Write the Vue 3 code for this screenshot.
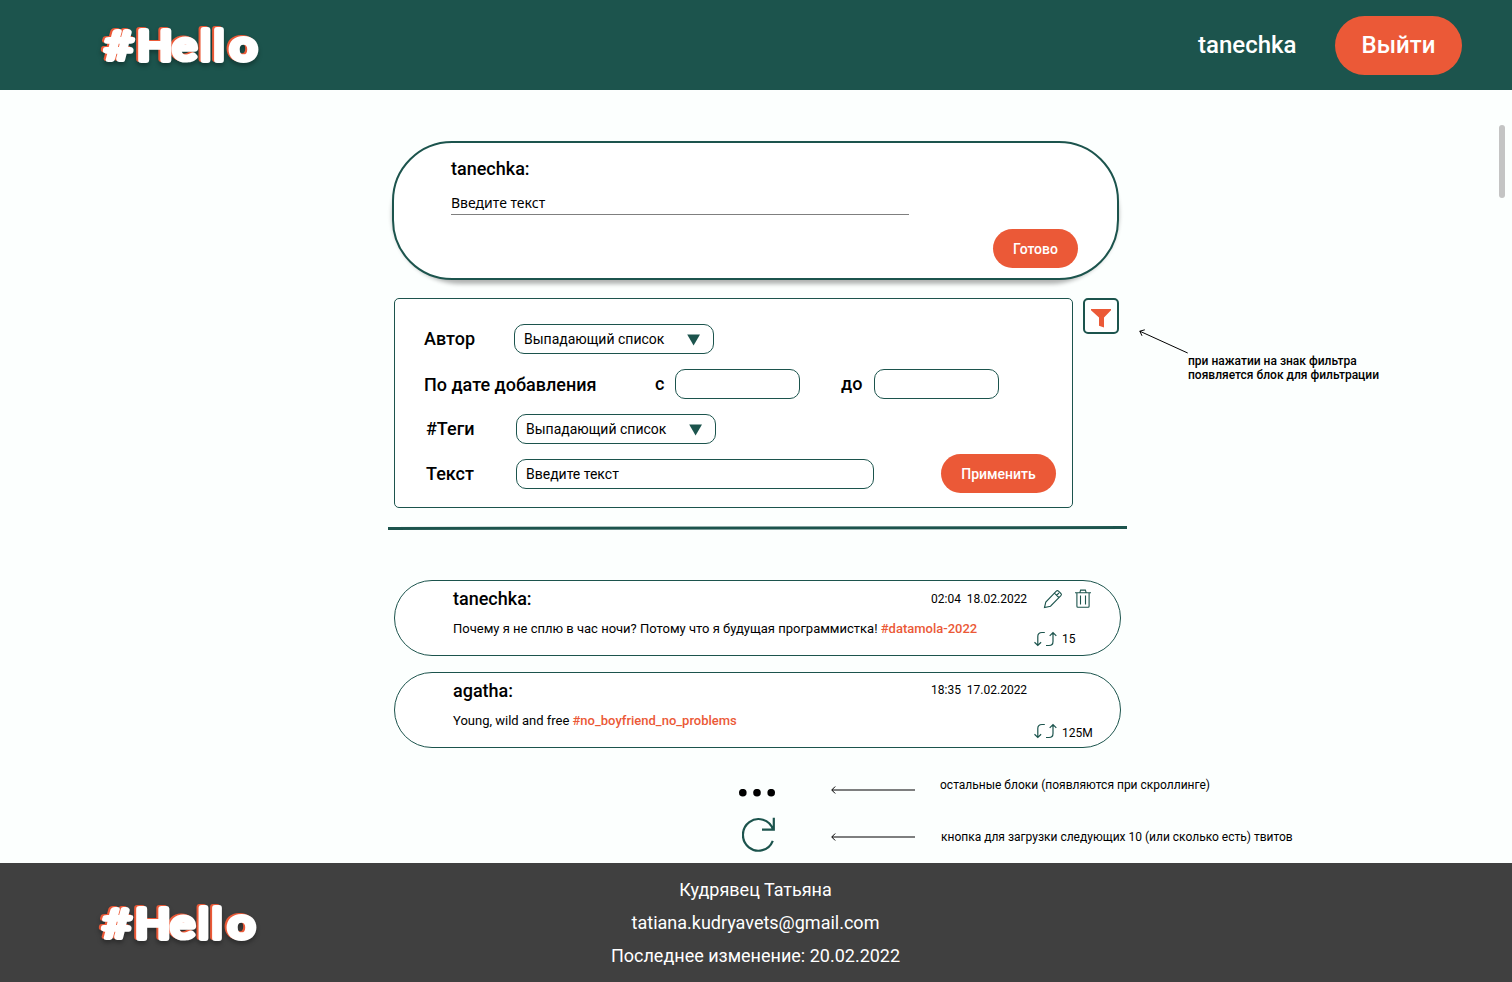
<script setup>
const letters = [
  { ch: '#', x: 104, w: 30, s: 4.2 },
  { ch: 'H', x: 137.2, w: 35, s: 5.8 },
  { ch: 'e', x: 172.6, w: 24.5, s: 5.2 },
  { ch: 'l', x: 200.6, w: 10, s: 5.8 },
  { ch: 'l', x: 214, w: 10, s: 5.8 },
  { ch: 'o', x: 230, w: 27, s: 5.8 }
]
const tweets = [
  { author: 'tanechka:', text: 'Почему я не сплю в час ночи? Потому что я будущая программистка!', tag: '#datamola-2022', date: '02:04\u00a0 18.02.2022', count: '15', own: true },
  { author: 'agatha:', text: 'Young, wild and free', tag: '#no_boyfriend_no_problems', date: '18:35\u00a0 17.02.2022', count: '125M', own: false }
]
</script>

<template>
  <div class="page">
    <header class="header">
      <svg class="logo" width="170" height="60" viewBox="95 15 170 60">
        <text v-for="(l, i) in letters" :key="i" :x="l.x" y="60.3" :textLength="l.w" :stroke-width="l.s" lengthAdjust="spacingAndGlyphs">{{ l.ch }}</text>
      </svg>
      <span class="user">tanechka</span>
      <button class="btn logout">Выйти</button>
    </header>

    <main class="main">
      <div class="scrollbar"></div>
      <section class="composer">
        <h2 class="author">tanechka:</h2>
        <div class="compose-input">Введите текст</div>
        <button class="btn small done">Готово</button>
      </section>

      <div class="filter-row">
        <section class="filters">
          <div class="line">
            <label class="lbl">Автор</label>
            <div class="field select"><span>Выпадающий список</span><svg width="14" height="12" viewBox="0 0 14 12"><path d="M.2 .5H13L6.6 11.5Z" fill="#1c544d" /></svg></div>
          </div>
          <div class="line dates">
            <label class="lbl wide">По дате добавления</label>
            <span class="lbl from">с</span><div class="field date"></div>
            <span class="lbl to">до</span><div class="field date"></div>
          </div>
          <div class="line shifted">
            <label class="lbl">#Теги</label>
            <div class="field select"><span>Выпадающий список</span><svg width="14" height="12" viewBox="0 0 14 12"><path d="M.2 .5H13L6.6 11.5Z" fill="#1c544d" /></svg></div>
          </div>
          <div class="line shifted">
            <label class="lbl">Текст</label>
            <div class="field text">Введите текст</div>
            <button class="btn small apply">Применить</button>
          </div>
        </section>
        <button class="filter-btn">
          <svg width="20" height="19" viewBox="0 0 20 19"><path d="M0 0H20V1.2L13 8.5V18.5L8 16.8V8.5L0 1.2Z" fill="#eb5937" /></svg>
        </button>
        <svg class="pointer" width="50" height="26" viewBox="0 0 50 26" fill="none" stroke="#000" stroke-width="1"><path d="M48.7 25L.8 3.2M5.8 1.8L.8 3.2L3 7.8" /></svg>
        <p class="note bold">при нажатии на знак фильтра<br />появляется блок для фильтрации</p>
      </div>

      <svg class="divider" width="739" height="5" viewBox="0 0 739 5"><path d="M0 3.5L739 2.5" stroke="#1c544d" stroke-width="3" /></svg>

      <article v-for="t in tweets" :key="t.author" class="tweet" :class="{ own: t.own }">
        <div class="body">
          <h2 class="author">{{ t.author }}</h2>
          <p class="msg">{{ t.text }} <b>{{ t.tag }}</b></p>
        </div>
        <div class="side">
          <div class="meta">
            <time>{{ t.date }}</time>
            <template v-if="t.own">
              <svg class="pencil" width="20" height="20" viewBox="0 0 20 20" fill="none" stroke="#1c544d" stroke-width="1.1"><path d="M1.5 18.5L2.8 13L13.3 2.1Q14.4 1 15.5 2.1L17.9 4.5Q19 5.6 17.9 6.7L7.5 17.2ZM11.5 4.2L15.8 8.5M13.6 6.3L15.9 4" /></svg>
              <svg class="trash" width="16" height="19" viewBox="0 0 16 19" fill="none" stroke="#1c544d" stroke-width="1.1"><path d="M0 3.8H16M4.8 3.8L5.6 1.1H10.4L11.2 3.8M1.9 3.8V17.3Q1.9 18.3 2.9 18.3H13.1Q14.1 18.3 14.1 17.3V3.8M5.5 6.5V15.5M10.5 6.5V15.5" /></svg>
            </template>
          </div>
          <div class="retweet">
            <svg width="23" height="16" viewBox="0 0 23 16" fill="none" stroke="#1c544d" stroke-width="1.2"><path d="M10.8 1.5H8Q3.8 1.5 3.8 5.5V14M.5 11.3L3.8 14.5L7.1 11.3M12 14.5H15Q19 14.5 19 10.5V2M15.7 4.8L19 1.5L22.3 4.8" /></svg>
            <span>{{ t.count }}</span>
          </div>
        </div>
      </article>

      <div class="more">
        <svg class="dots" width="36" height="8" viewBox="0 0 36 8"><circle cx="3.8" cy="3.7" r="3.8" /><circle cx="18" cy="3.7" r="3.8" /><circle cx="32.2" cy="3.7" r="3.8" /></svg>
        <svg class="arrow" width="84" height="8" viewBox="0 0 84 8" fill="none" stroke="#000"><path d="M1 4H84" stroke-opacity=".5" stroke-width="2" /><path d="M4.2 .5L.7 4L4.2 7.5" /></svg>
        <p class="note">остальные блоки (появляются при скроллинге)</p>
      </div>
      <div class="more reload">
        <svg class="circle" width="34" height="36" viewBox="0 0 34 36" fill="none" stroke="#1c544d" stroke-width="2.2"><path d="M31 12.5A15.5 15.8 0 1 0 30.8 23.8M31.8 .8V12.6H20" /></svg>
        <svg class="arrow" width="84" height="8" viewBox="0 0 84 8" fill="none" stroke="#000"><path d="M1 4H84" stroke-opacity=".5" stroke-width="2" /><path d="M4.2 .5L.7 4L4.2 7.5" /></svg>
        <p class="note">кнопка для загрузки следующих 10 (или сколько есть) твитов</p>
      </div>
    </main>

    <footer class="footer">
      <svg class="logo" width="170" height="60" viewBox="95 15 170 60">
        <text v-for="(l, i) in letters" :key="i" :x="l.x" y="60.3" :textLength="l.w" :stroke-width="l.s" lengthAdjust="spacingAndGlyphs">{{ l.ch }}</text>
      </svg>
      <div class="contacts">
        <p>Кудрявец Татьяна</p>
        <p>tatiana.kudryavets@gmail.com</p>
        <p>Последнее изменение: 20.02.2022</p>
      </div>
    </footer>
  </div>
</template>

<style>
body { margin: 0; overflow: hidden; }
</style>

<style scoped>
* { box-sizing: border-box; }
.page { width: 1512px; height: 982px; display: flex; flex-direction: column; background: #fcfffe; font-family: Roboto, "Liberation Sans", sans-serif; color: #000; overflow: hidden; }
p, h2 { margin: 0; }
.header { height: 90px; flex: none; background: #1c544d; display: flex; align-items: center; padding: 0 50px 0 95px; }
.logo { flex: none; overflow: visible; filter: drop-shadow(-1.4px -.8px 0 #eb5937) drop-shadow(0 3px 2px rgba(0, 0, 0, .3)); }
.logo text { font-family: Lato, sans-serif; font-weight: 400; font-size: 41px; fill: #fff; stroke: #fff; stroke-linejoin: round; }
.user { margin-left: auto; color: #fff; font-size: 24px; font-weight: 500; line-height: 28px; }
.btn { border: 0; padding: 0; background: #eb5937; color: #fff; font-family: inherit; font-weight: 500; flex: none; }
.logout { width: 127px; height: 59px; margin-left: 38.5px; border-radius: 30px; font-size: 24px; }
.small { height: 39px; border-radius: 20px; font-size: 14px; }
.main { position: relative; z-index: 0; height: 773px; flex: none; padding: 51px 0 0 388px; }
.scrollbar { position: absolute; left: 1499px; top: 35px; width: 6px; height: 73px; border-radius: 3px; background: #c4c4c4; }
.composer { position: relative; width: 727px; height: 139px; margin-left: 4px; border: 2px solid #1c544d; border-radius: 60px; background: #fff; padding: 15px 39px 0 57px; display: flex; flex-direction: column; }
.composer::before { content: ""; position: absolute; inset: -2px; z-index: -1; border-radius: 70px; box-shadow: 0 4px 4px rgba(0, 0, 0, .3); }
.author { font-size: 18px; font-weight: 500; line-height: 21px; }
.compose-input { width: 458px; height: 23px; margin-top: 13px; border-bottom: 1px solid #7f7f7f; font: 14px/22px "Noto Sans", sans-serif; }
.done { width: 85px; margin-top: 14px; align-self: flex-end; }
.filter-row { display: flex; margin: 18px 0 0 6px; height: 210px; }
.filters { width: 679px; height: 210px; border: 1px solid #1c544d; border-radius: 5px; background: #fff; padding: 25px 16px 0 29px; display: flex; flex-direction: column; gap: 15px; }
.line { display: flex; align-items: center; height: 30px; }
.shifted { padding-left: 2px; }
.lbl { font-size: 18px; font-weight: 500; line-height: 21px; padding-bottom: 2px; width: 90px; flex: none; }
.wide { width: 231px; padding-bottom: 0; }
.from { width: 20px; }
.to { width: 33px; margin-left: 41px; }
.field { height: 30px; border: 1px solid #1c544d; border-radius: 10px; background: #fff; font-size: 14px; line-height: 28px; padding-left: 9px; }
.select { width: 200px; display: flex; align-items: center; justify-content: space-between; padding-right: 12px; }
.select svg { margin-top: 2px; }
.date { width: 125px; }
.text { width: 358px; }
.apply { width: 115px; margin: -1px 0 0 auto; padding-top: 1px; }
.filter-btn { width: 36px; height: 36px; margin-left: 10px; padding: 4px 0 0; border: 2px solid #1c544d; border-radius: 5px; background: #fff; display: flex; align-items: center; justify-content: center; flex: none; }
.pointer { margin: 30px 0 0 20px; flex: none; }
.note { font-size: 12px; line-height: 14px; white-space: nowrap; }
.bold { font-weight: 500; margin: 56px 0 0 -1px; }
.divider { display: block; margin: 17px 0 50px; }
.tweet { width: 727px; height: 76px; margin: 0 0 16px 6px; border: 1px solid #1c544d; border-radius: 38px; background: #fff; padding: 7px 0 0 58px; display: flex; }
.body { width: 478px; white-space: nowrap; }
.msg { font-size: 13px; line-height: 15px; margin-top: 12px; }
.msg b { color: #eb5937; font-weight: 500; }
.side { font-size: 12px; line-height: 14px; }
.meta { display: flex; height: 20px; }
.own .meta { padding-top: 1px; }
.meta time { width: 112px; padding-top: 3px; white-space: nowrap; flex: none; }
.pencil, .trash { flex: none; }
.trash { margin-left: 12px; }
.retweet { display: flex; align-items: center; gap: 5px; margin: 23px 0 0 103px; }
.tweet:not(.own) .retweet span { padding-top: 4px; }
.tweet:not(.own) .retweet { margin-top: 22px; }
.more { display: flex; align-items: center; height: 20px; margin: 33px 0 0 351px; }
.dots, .circle, .arrow { flex: none; }
.dots { margin-top: 3px; }
.dots + .arrow { margin: -2px 25px 0 56px; }
.dots ~ .note { margin-top: -12px; }
.reload { height: 36px; margin: 16px 0 0 354px; }
.reload .arrow { margin: 3px 26px 0 55px; }
.reload .note { margin-top: 3px; }
.footer { height: 119px; background: #404040; display: flex; padding-left: 93px; color: #fff; }
.footer .logo { margin-top: 30px; }
.contacts { margin-left: 242.5px; padding-top: 10px; width: 500px; text-align: center; font-size: 18px; line-height: 33px; }
</style>
